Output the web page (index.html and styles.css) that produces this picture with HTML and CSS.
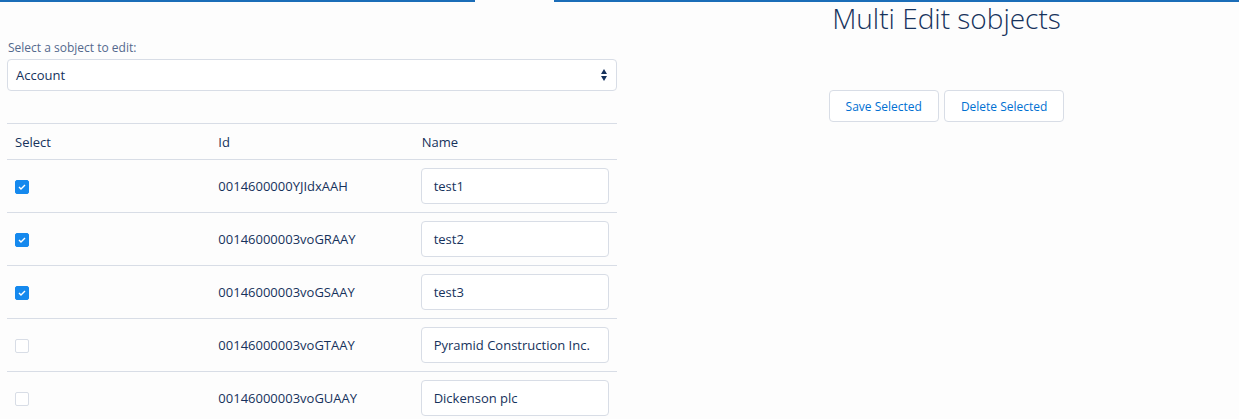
FILE: index.html
```html
<!DOCTYPE html>
<html>
<head>
<meta charset="utf-8">
<link rel="stylesheet" href="styles.css">
</head>
<body>
<div class="topbar"><span class="bar-left"></span><span class="bar-gap"></span><span class="bar-right"></span></div>
<div class="page">
  <div class="left">
    <label class="field-label">Select a sobject to edit:</label>
    <div class="select">
      <span>Account</span>
      <svg class="arrows" width="8" height="14" viewBox="0 0 8 14"><path d="M4 1 L7 6 L1 6 Z" fill="#16325c"/><path d="M1 8 L7 8 L4 13 Z" fill="#16325c"/></svg>
    </div>
    <table class="grid">
      <thead>
        <tr><th>Select</th><th>Id</th><th>Name</th></tr>
      </thead>
      <tbody>
        <tr><td><span class="cb on"><svg width="8" height="6" viewBox="0 0 8 6"><path d="M1 3 L3 5 L7 1" fill="none" stroke="#fff" stroke-width="1.4"/></svg></span></td><td>0014600000YJIdxAAH</td><td><div class="inp">test1</div></td></tr>
        <tr><td><span class="cb on"><svg width="8" height="6" viewBox="0 0 8 6"><path d="M1 3 L3 5 L7 1" fill="none" stroke="#fff" stroke-width="1.4"/></svg></span></td><td>00146000003voGRAAY</td><td><div class="inp">test2</div></td></tr>
        <tr><td><span class="cb on"><svg width="8" height="6" viewBox="0 0 8 6"><path d="M1 3 L3 5 L7 1" fill="none" stroke="#fff" stroke-width="1.4"/></svg></span></td><td>00146000003voGSAAY</td><td><div class="inp">test3</div></td></tr>
        <tr><td><span class="cb"></span></td><td>00146000003voGTAAY</td><td><div class="inp">Pyramid Construction Inc.</div></td></tr>
        <tr><td><span class="cb"></span></td><td>00146000003voGUAAY</td><td><div class="inp">Dickenson plc</div></td></tr>
      </tbody>
    </table>
  </div>
  <div class="right">
    <h1 class="title">Multi Edit sobjects</h1>
    <div class="buttons">
      <button class="btn">Save Selected</button>
      <button class="btn">Delete Selected</button>
    </div>
  </div>
</div>
</body>
</html>
```

FILE: styles.css
```css
html, body {
  margin: 0;
  padding: 0;
  background: #fdfdfd;
  font-family: "Open Sans", "Liberation Sans", sans-serif;
  color: #16325c;
  overflow: hidden;
}
.topbar {
  display: flex;
  height: 2px;
}
.bar-left { width: 475px; background: #1b6db8; }
.bar-gap { width: 79px; background: #fdfdfd; }
.bar-right { flex: 1; background: #1b6db8; }

.page {
  display: flex;
}
.left {
  width: 610px;
  padding-left: 7px;
  flex: none;
}
.field-label {
  display: block;
  font-size: 12px;
  color: #54698d;
  margin-top: 37px;
  line-height: 18px;
  padding-left: 1px;
}
.select {
  margin-top: 2px;
  height: 30px;
  border: 1px solid #d8dde6;
  border-radius: 4px;
  background: #fff;
  display: flex;
  align-items: center;
  justify-content: space-between;
  padding: 0 8px 0 8px;
  font-size: 13px;
}
.grid {
  margin-top: 32px;
  width: 610px;
  border-collapse: collapse;
  font-size: 13px;
  table-layout: fixed;
}
.grid th {
  text-align: left;
  font-weight: 400;
  height: 35px;
  padding: 0 8px;
  border-top: 1px solid #d8dde6;
  border-bottom: 1px solid #d8dde6;
  width: 187px;
}
.grid td {
  height: 52px;
  padding: 0 8px;
  border-bottom: 1px solid #d8dde6;
  color: #16325c;
}
.cb {
  display: inline-flex;
  align-items: center;
  justify-content: center;
  width: 14px;
  height: 14px;
  box-sizing: border-box;
  border: 1px solid #d8dde6;
  border-radius: 2px;
  background: #fff;
  vertical-align: middle;
  position: relative;
  top: -1px;
}
.cb.on {
  background: #1589ee;
  border-color: #1589ee;
}
.inp {
  height: 36px;
  border: 1px solid #d8dde6;
  border-radius: 4px;
  background: #fff;
  display: flex;
  align-items: center;
  padding: 0 12px;
  box-sizing: border-box;
  width: 188px;
  white-space: nowrap;
  overflow: hidden;
  margin-left: -1px;
}
.right {
  flex: 1;
  display: flex;
  flex-direction: column;
  align-items: center;
  padding-left: 37px;
}
.title {
  margin: -1px 0 0 0;
  font-size: 28px;
  font-weight: 300;
  line-height: 34px;
  color: #16325c;
}
.buttons {
  display: flex;
  gap: 5px;
  margin-top: 55px;
}
.btn {
  height: 32px;
  padding: 0 16px;
  background: #fff;
  border: 1px solid #d8dde6;
  border-radius: 4px;
  color: #0070d2;
  font-family: inherit;
  font-size: 12px;
}
```
